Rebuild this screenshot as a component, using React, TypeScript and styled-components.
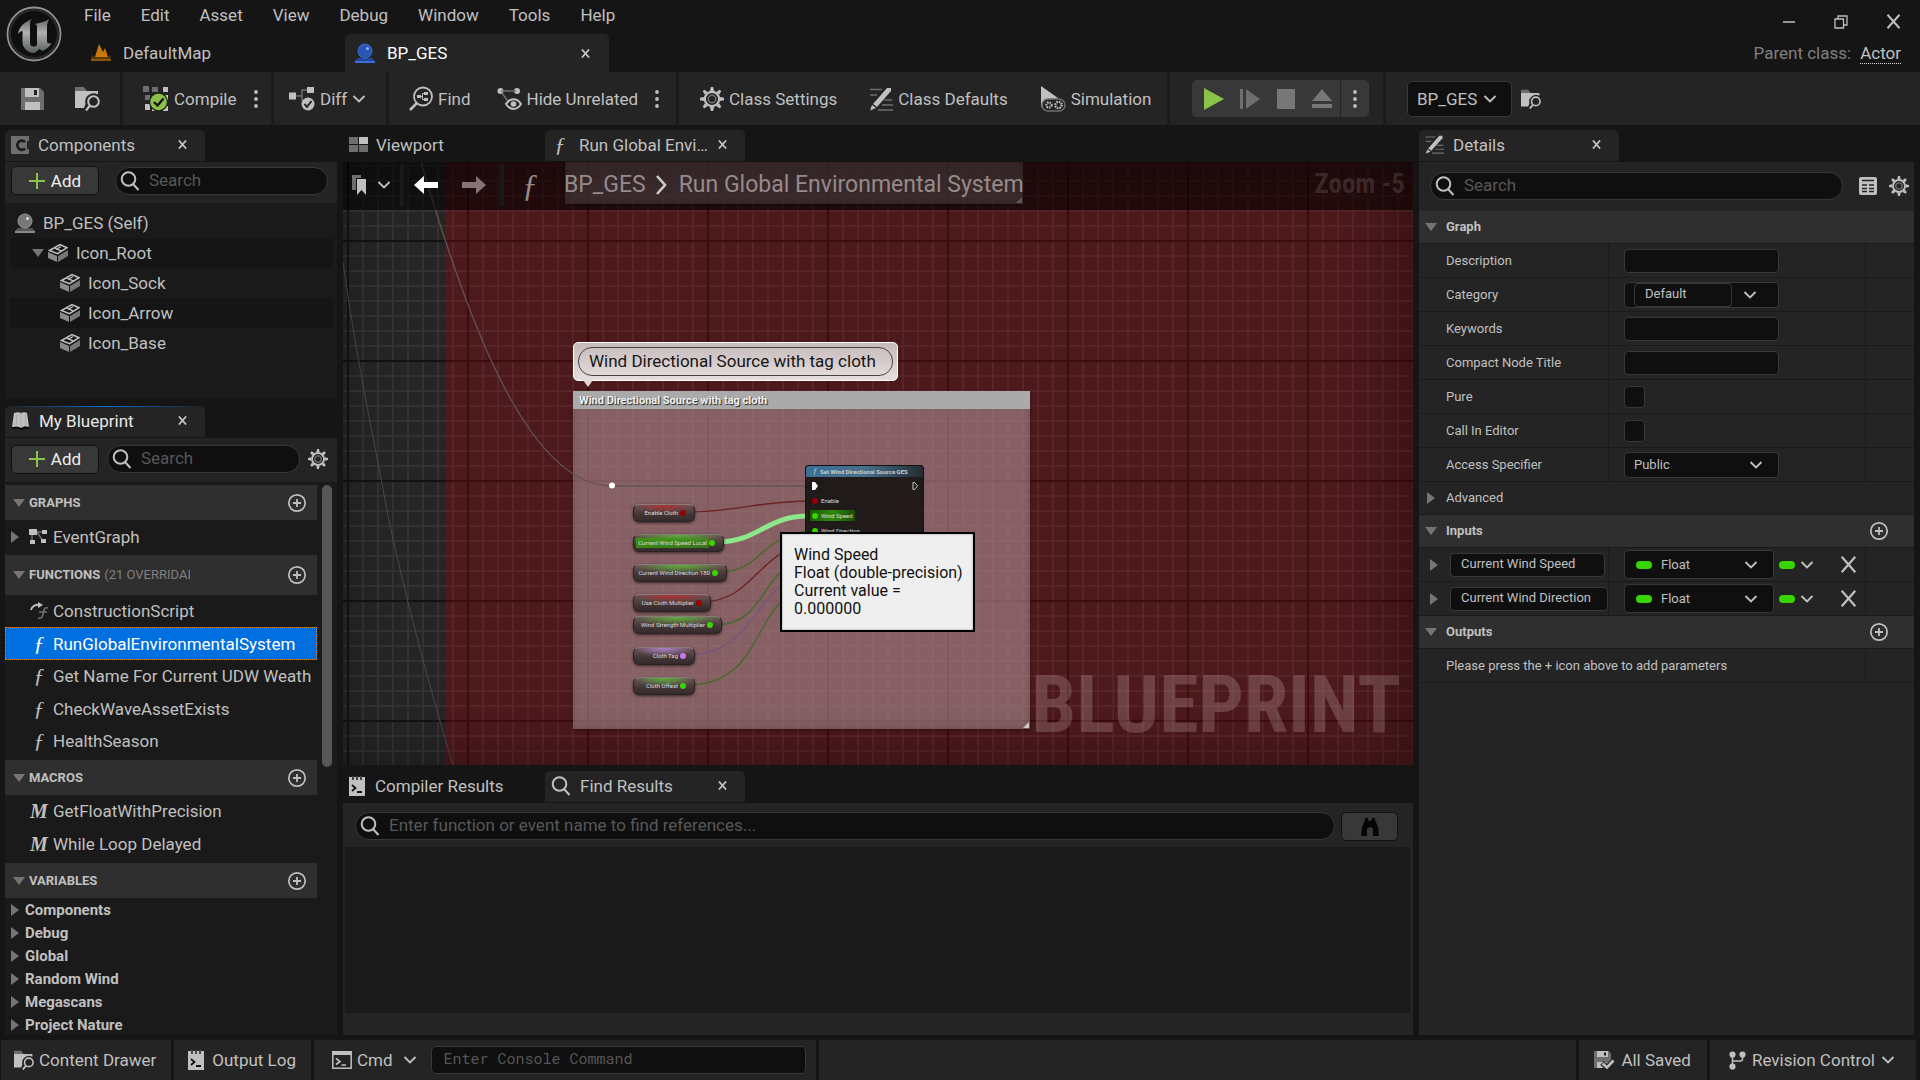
import React from 'react';
import styled, { createGlobalStyle, css } from 'styled-components';

const c = {
  back: '#151515', panel: '#242424', recess: '#1a1a1a', header: '#2f2f2f', input: '#0f0f0f',
  line: '#1a1a1a', border: '#383838', text: '#c0c0c0', dim: '#808080', faint: '#575757',
  green: '#8bc24a', pin: '#38d500', blue: '#0070e0',
};

const GlobalStyle = createGlobalStyle`
  *, *::before, *::after { box-sizing: border-box; }
  html, body { margin: 0; background: ${c.back}; }
  body, button, input, select {
    font-family: Roboto, "Liberation Sans", sans-serif; font-size: 17px; line-height: 20px; color: ${c.text};
  }
  button { border: 0; padding: 0; background: none; cursor: pointer; }
  svg { display: block; flex: none; }
  ul { margin: 0; padding: 0; list-style: none; }
`;

/* ---------- icons ---------- */
type IconProps = { size?: number; w?: number; h?: number; children?: React.ReactNode };
const Svg = ({ size = 24, w, h, children }: IconProps) => (
  <svg width={w ?? size} height={h ?? size} viewBox={`0 0 ${w ?? size} ${h ?? size}`} fill="none" aria-hidden="true">{children}</svg>
);
const L = c.text;
const D = '#6e6e6e';

const Chevron = () => <Svg w={14} h={10}><path d="M1.500 2L7 7.500 12.500 2" stroke={L} strokeWidth="1.900" /></Svg>;
const Cross = ({ size = 9 }: { size?: number }) => (
  <svg width={size} height={size} viewBox="0 0 10 10" aria-hidden="true"><path d="M1 .5l8 9M9 .5L1 9.500" stroke={L} strokeWidth={size > 10 ? 1.3 : 2} /></svg>
);
const Dots = () => <Svg w={6} h={20}><circle cx="3" cy="3" r="1.900" fill={L} /><circle cx="3" cy="10" r="1.900" fill={L} /><circle cx="3" cy="17" r="1.900" fill={L} /></Svg>;
const TriDown = () => <Svg w={12} h={8}><path d="M0 0h12L6 8z" fill="#757575" /></Svg>;
const TriRight = () => <Svg w={8} h={12}><path d="M0 0l8 6-8 6z" fill="#757575" /></Svg>;
const Magnifier = () => <Svg size={20}><circle cx="8.500" cy="8" r="6.800" stroke={L} strokeWidth="2" /><path d="M13 13l5.500 6" stroke={L} strokeWidth="2" /></Svg>;
const Plus = () => <Svg size={16}><path d="M8 0v16M0 8h16" stroke={c.green} strokeWidth="2" /></Svg>;
const PlusCircle = () => <Svg size={20}><circle cx="10" cy="10" r="8.200" stroke={L} strokeWidth="1.700" /><path d="M10 6v8M6 10h8" stroke={L} strokeWidth="1.800" /></Svg>;
const Save = () => <Svg w={23} h={24}><path d="M0 1h19l4 4v18H0z" fill={D} /><path d="M4 1h14v9H4zM4 15h15v8H4z" fill={L} /><path d="M13 3h3v5h-3z" fill="#222" /></Svg>;
const SaveCheck = () => <Svg w={21} h={20}><path d="M0 1h15l2 3v14H0z" fill={D} /><path d="M3 1h11v6H3zM3 12h9v6H3z" fill={L} /><path d="M10 2.500h2v3h-2z" fill="#222" /><path d="M8 13l5 5 7-8" stroke="#242424" strokeWidth="5" /><path d="M8.500 13.500l4.500 4 6.500-7" stroke={L} strokeWidth="2.600" /></Svg>;
const FolderSearch = ({ small }: { small?: boolean }) => (
  <svg width={small ? 20 : 25} height={small ? 20 : 25} viewBox="0 0 25 25" fill="none" aria-hidden="true">
    <path d="M0 1h9l3 4H0z" fill={D} /><path d="M0 5h23v3.500a8.500 8.500 0 0 0-12.500 9.500L9 22H0z" fill={L} />
    <circle cx="18.500" cy="15.500" r="5.300" stroke={L} strokeWidth="2" /><path d="M15 19.500L11 24.500" stroke={L} strokeWidth="2.200" />
  </svg>
);
const Compile = () => (
  <Svg w={26} h={26}>
    <path d="M0 0h6v6H0zM9 1h6v5H9zM2 9h5v5H2z" fill={D} /><path d="M20 1h5v5h-5zM10 9h5v5h-5zM19 9h6v5h-6zM2 18h5v6H2zM20 20h5v5h-5zM9 20h5v5H9z" fill={L} />
    <circle cx="15.500" cy="16" r="9.500" fill="#1d2414" /><circle cx="15.500" cy="16" r="8.300" fill={c.green} /><path d="M11 16l3.500 3.500 6-7" stroke="#111" strokeWidth="2.400" />
  </Svg>
);
const Diff = () => (
  <Svg w={26} h={26}>
    <path d="M7 10h6M13 10V4h5M13 10v5" stroke={D} strokeWidth="1.500" /><path d="M0 6.500h7v7H0zM18 1h7v6h-7z" fill={L} />
    <circle cx="19" cy="18" r="6.500" fill={L} /><path d="M15.500 18l2.500 3 4.500-6" stroke="#242424" strokeWidth="2" />
  </Svg>
);
const FindGraph = () => (
  <Svg w={24} h={25}>
    <circle cx="14" cy="10.500" r="9" stroke={L} strokeWidth="1.800" /><path d="M8 17l-7 7" stroke={L} strokeWidth="2.600" />
    <path d="M8 9h4v3H8zM15 6h4v3h-4zM15 12h4v3h-4z" fill={L} /><path d="M12 10.500h2M15 7.500h-1.500v6H15" stroke={L} />
  </Svg>
);
const HideUnrelated = () => (
  <Svg w={25} h={24}>
    <circle cx="3.500" cy="4" r="3" fill={L} /><circle cx="20" cy="4" r="3" fill={L} /><path d="M4 4h15M5 6l5 7" stroke={D} strokeWidth="1.500" />
    <path d="M9 17c4-6.500 11-6.500 15 0-4 6.500-11 6.500-15 0z" stroke={L} strokeWidth="2" /><circle cx="16.500" cy="17" r="2.800" fill={L} />
  </Svg>
);
const Gear = ({ size = 24 }: { size?: number }) => (
  <svg width={size} height={size} viewBox="-12 -12 24 24" fill="none" aria-hidden="true">
    {[0, 45, 90, 135, 180, 225, 270, 315].map(a => <path key={a} transform={`rotate(${a})`} d="M-2 -8l.8-4h2.400L2 -8z" fill={L} />)}
    <circle r="7.200" stroke={L} strokeWidth="2.200" /><circle r="3.800" stroke={D} strokeWidth="1.600" />
  </svg>
);
const PencilLines = ({ size = 24 }: { size?: number }) => (
  <svg width={size} height={size} viewBox="0 0 24 24" fill="none" aria-hidden="true">
    <path d="M1 2.500h12M1 8h7M15 13h8M13 18h11M9 23h15" stroke={D} strokeWidth="1.500" />
    <path d="M18 1h4v3L8 20l-4-3z" fill={L} /><path d="M3 18l4 3-6 2.500z" fill={L} />
  </svg>
);
const Simulation = () => (
  <Svg w={26} h={26}>
    <path d="M1 0l17 12L1 21z" fill={L} /><rect x="2" y="13" width="23" height="12" rx="6" fill="#242424" stroke={D} strokeWidth="1.500" />
    <circle cx="9" cy="19" r="2.600" stroke={L} strokeWidth="2.200" strokeDasharray="1.500 1" /><circle cx="18.500" cy="19" r="3.200" stroke={L} strokeWidth="2.200" strokeDasharray="1.500 1" />
  </Svg>
);
const Orb = ({ blue }: { blue?: boolean }) => (
  <Svg size={20}>
    <path d="M3 15h14l3 3H0z" fill={blue ? '#24479a' : '#555'} /><path d="M0 18h20v2H0z" fill={blue ? '#3a6fdd' : '#8a8a8a'} />
    <circle cx="10" cy="8" r="7" fill={blue ? '#2c56b4' : '#777'} stroke={blue ? '#3a6fdd' : '#999'} /><circle cx="12.500" cy="5.500" r="1.500" fill={blue ? '#8fb4ff' : '#ddd'} />
  </Svg>
);
const MapIcon = () => <Svg size={20}><path d="M4 14L8 1l4 8 2-4 3 9z" fill="#c97a08" /><path d="M1 12l-1 5h20l-1-5-2 2H3z" fill="#5b3a0b" /><path d="M0 16h20v2H0z" fill="#8a560c" /></Svg>;
const ComponentsIcon = () => <Svg w={18} h={18}><path d="M0 0h18v5h-2v8h2v5H0z" fill={D} /><path d="M14 6a4.500 4.500 0 1 0 0 6.500" stroke="#1c1c1c" strokeWidth="2.800" /></Svg>;
const ViewportIcon = () => <Svg w={19} h={15}><path d="M0 0h9v7H0z M0 8h9v7H0z M10 8h9v7h-9z" fill={D} /><path d="M10 0h9v7h-9z" fill={L} /></Svg>;
const BookIcon = () => <Svg w={20} h={18}><path d="M3 1c3-1 5-1 7 0 2-1 4-1 6 0l2 14c-3-1-5-1-8 1-3-2-6-1-9-1z" fill={L} /><path d="M10 1v14M6 2L5 14M14 2l1 12" stroke="#aaa" /><path d="M1 16c4-1 7 0 9 1 3-1 6-2 8-1" stroke="#050505" strokeWidth="1.500" /></Svg>;
const Cube = () => (
  <Svg w={20} h={20}>
    <path d="M0 9l9 4v6l-9-4z" fill="#8a8a8a" /><path d="M10 13l10-6v6l-10 6z" fill="#777" />
    <path d="M1.500 7.500L12 1.500l7 3.200-9.500 6z" stroke={L} strokeWidth="1.500" /><path d="M6.500 4.800l7.500 3.500M8 6.500l5-3" stroke={L} strokeWidth="1.300" />
  </Svg>
);
const EventGraphIcon = () => <Svg w={19} h={17}><path d="M8 4h6M8 4l6 9M3 6v8" stroke={D} strokeWidth="1.500" /><path d="M0 1h8v6H0zM13 2h5v4h-5zM1 12h5v4H1zM12 11h5v4h-5z" fill={L} /></Svg>;
const ConstructionIcon = () => <Svg w={18} h={18}><path d="M1 8c1-4 5-6 9-5" stroke={L} strokeWidth="1.800" /><path d="M8 0l5 3-5 3z" fill={L} /><path d="M18 6c-3-1-4 1-4.500 4-1 5-1.500 7-5.500 6M9 10h8" stroke={D} strokeWidth="1.600" /></Svg>;
const LogIcon = () => <Svg w={16} h={20}><path d="M0 1h3v3h2V1h2v3h2V1h2v3h2V1h3v19H0z" fill={L} /><path d="M4 0v4M8 0v4M12 0v4" stroke={D} /><path d="M3 9l3.500 3L3 15M8 16h5" stroke="#111" strokeWidth="1.800" /></Svg>;
const CmdIcon = () => <Svg w={20} h={18}><rect x=".8" y=".8" width="18.400" height="16.400" stroke={L} strokeWidth="1.500" /><path d="M0 0h20v4H0z" fill={L} /><path d="M4 7.500l4 3-4 3M9.500 14H14" stroke={L} strokeWidth="1.600" /></Svg>;
const Branch = () => <Svg w={17} h={19}><path d="M3.500 3v13M13.500 3v5q0 2-2 2H4" stroke={L} strokeWidth="1.500" /><circle cx="3.500" cy="3.500" r="3.100" fill={L} /><circle cx="13.500" cy="3.500" r="3.100" fill={L} /><circle cx="3.500" cy="15.500" r="3.100" fill={L} /></Svg>;
const TableIcon = () => <Svg w={18} h={18}><rect width="18" height="18" rx="2" fill={L} /><path d="M3 3.500h12M3 8h5M10 8h5M3 11.500h5M10 11.500h5M3 14.500h5M10 14.500h5" stroke="#242424" strokeWidth="1.700" /></Svg>;
const Bookmark = () => <Svg w={16} h={20}><path d="M0 0h9v3H4v12H0z" fill={D} /><path d="M5 4h9v16l-4.500-5L5 20z" fill={L} /></Svg>;
const Binoculars = () => <Svg w={18} h={18}><path d="M4 0h3v2h1v8H6v8H0l1-9 3-7zM14 0h-3v2h-1v8h2v8h6l-1-9-3-7z" fill="#050505" /><path d="M8 3h2v6H8z" fill="#050505" /></Svg>;
const ArrowLeft = () => <Svg w={24} h={20}><path d="M0 10L10 1v6h14v6H10v6z" fill="#fff" /></Svg>;
const ArrowRight = () => <Svg w={24} h={20}><path d="M24 10L14 1v6H0v6h14v6z" fill="#857476" /></Svg>;
const Logo = () => (
  <Svg size={56}>
    <defs><linearGradient id="metal" x1="0" y1="0" x2="0" y2="1"><stop offset="0" stopColor="#666" /><stop offset=".4" stopColor="#b0b0b0" /><stop offset="1" stopColor="#56605f" /></linearGradient></defs>
    <circle cx="28" cy="28" r="26.500" fill="#0f0f0f" stroke="#8f9494" strokeWidth="1.800" /><circle cx="28" cy="28" r="24" stroke="#2b2b2b" strokeWidth="2" />
    <path d="M12 28c1-7 6-12 14-15-2 2-2 3-2 5v18c0 3 1 4.500 3.500 4.500S31 40 31 38V21c0-2-1-3-2.500-3 5-1 10-2 15-5-2 3-2.500 5-2.500 7v15c0 2 1 3 4.500 2-2 4-5 6-9 8l-3-2-5 4c-7 0-12-5-12-11V26c0-2-2-1-4.500 2z" fill="url(#metal)" />
  </Svg>
);

const Glyph = styled.i<{ $size?: number; $bold?: boolean; $w?: number }>`
  font: italic ${p => (p.$bold ? 700 : 400)} ${p => p.$size ?? 22}px/20px "Liberation Serif", serif;
  width: ${p => p.$w ?? 18}px; text-align: center; flex: none;
`;

/* ---------- frame ---------- */
const Shell = styled.div`display: flex; flex-direction: column; height: 100vh; overflow: hidden; background: ${c.back}; white-space: nowrap;`;
const TitleBar = styled.header`display: flex; height: 72px; flex: none;`;
const LogoBox = styled.div`padding: 6px 0 0 6px; width: 81px;`;
const TitleMid = styled.div`flex: 1; display: flex; flex-direction: column; justify-content: space-between;`;
const MenuBar = styled.nav`display: flex; gap: 30px; padding: 5px 0 0 3px;`;
const DocTabs = styled.div`display: flex; height: 38px;`;
const DocTab = styled.div<{ $on?: boolean }>`
  display: flex; align-items: center; gap: 12px; width: 264px; padding: 0 19px 0 10px;
  border-radius: 5px 5px 0 0; background: ${p => (p.$on ? c.panel : 'transparent')}; color: ${p => (p.$on ? '#fff' : c.text)};
  & > span { flex: 1; }
`;
const TitleRight = styled.div`display: flex; flex-direction: column; align-items: flex-end; padding: 14px 19px 0 0; gap: 14px;`;
const WindowButtons = styled.div`display: flex; gap: 36px; align-items: center; height: 15px; button { width: 16px; display: grid; place-items: center; }`;
const Parent = styled.div`color: ${c.dim}; display: flex; gap: 9px; a { color: ${c.text}; text-decoration: none; border-bottom: 1px dotted #ddd; }`;

const Toolbar = styled.div`display: flex; height: 53px; flex: none; background: ${c.panel}; margin-bottom: 5px;`;
const ToolGroup = styled.div<{ $w?: number; $gap?: number; $pad?: number }>`
  display: flex; align-items: center; gap: ${p => p.$gap ?? 20}px; padding-left: ${p => p.$pad ?? 21}px;
  ${p => p.$w && css`width: ${p.$w}px;`} border-right: 3px solid ${c.line};
  &:last-child { border-right: 0; }
`;
const ToolButton = styled.button`display: flex; align-items: center; gap: 5px;`;
const Split = styled.div`display: flex; align-items: center; gap: 16px;`;
const PlayGroup = styled.div`
  display: flex; align-items: center; height: 37px; padding-left: 4px; background: #383838; border-radius: 5px;
  button { width: 36px; height: 37px; display: grid; place-items: center; }
  button:last-child { width: 29px; border-left: 1px solid ${c.panel}; }
`;
const TargetSelect = styled.button`
  display: flex; align-items: center; justify-content: space-between; width: 105px; height: 36px; padding: 0 14px 0 9px;
  background: ${c.input}; border: 1px solid ${c.border}; border-radius: 5px;
`;

const Main = styled.main`flex: 1; min-height: 0; display: grid; grid-template-columns: 332px minmax(0, 1fr) 495px; column-gap: 6px; padding: 0 6px 5px 5px;`;
const Column = styled.section`display: flex; flex-direction: column; min-height: 0; min-width: 0;`;
const TabStrip = styled.div<{ $top?: number }>`display: flex; height: 32px; flex: none; margin-top: ${p => p.$top ?? 0}px;`;
const PanelTab = styled.div<{ $on?: boolean; $focus?: boolean; $gap?: number }>`
  position: relative; display: flex; align-items: center; gap: ${p => p.$gap ?? 9}px; width: ${p => (p.$on ? 200 : 202)}px; height: 31px; padding: 0 18px 2px 6px;
  background: ${p => (p.$on ? c.panel : 'transparent')}; border-radius: 5px 5px 0 0; color: ${p => (p.$focus ? '#e8e8e8' : c.text)};
  & > span { flex: 1; overflow: hidden; }
  ${p => p.$focus && css`&::before { content: ''; position: absolute; inset: 0 4px auto 4px; height: 1px; background: linear-gradient(90deg, transparent, ${c.blue}, transparent); }`}
`;
const PanelBar = styled.div<{ $h: number; $gap: number; $pb: number }>`
  display: flex; align-items: center; gap: ${p => p.$gap}px; height: ${p => p.$h}px; flex: none; padding: 0 9px ${p => p.$pb}px 6px; background: ${c.panel};
`;
const AddButton = styled.button`
  display: flex; align-items: center; justify-content: center; gap: 6px; width: 88px; height: 29px; flex: none;
  background: #383838; border: 1px solid #111; border-radius: 5px; color: #f0f0f0;
`;
const SearchBox = styled.label`
  display: flex; align-items: center; gap: 9px; flex: 1; min-width: 0; height: 28px; padding: 0 4px;
  background: ${c.input}; border: 1px solid ${c.border}; border-radius: 14px;
  input { flex: 1; min-width: 0; border: 0; outline: 0; padding: 0 0 2px; background: none; }
  input::placeholder { color: ${c.faint}; opacity: 1; }
`;

/* ---------- left column ---------- */
const Tree = styled.ul`height: 196px; padding: 5px 4px 0 5px; background: ${c.recess}; margin-bottom: 7px;`;
const TreeRow = styled.li<{ $pad: number; $dark?: boolean }>`
  display: flex; align-items: center; height: 30px; padding-left: ${p => p.$pad}px; background: ${p => (p.$dark ? c.back : 'transparent')};
  & > span { padding-left: 8px; }
`;
const Disclosure = styled.button`width: 16px;`;
const BlueprintBody = styled.div`flex: 1; min-height: 0; display: flex; gap: 5px; padding: 3px 5px 0 0; background: ${c.recess}; overflow: hidden;`;
const BlueprintList = styled.div`flex: 1; min-width: 0; overflow: hidden;`;
const ScrollThumb = styled.div`width: 10px; height: 282px; border-radius: 5px; background: #575757;`;
const Section = styled.div<{ $h?: number }>`
  display: flex; align-items: center; gap: 4px; height: ${p => p.$h ?? 35}px; padding: 0 10px 0 8px; background: ${c.header};
  font-size: 13px; font-weight: 700;
  span { font-weight: 400; color: ${c.dim}; width: 86px; overflow: hidden; }
  button { margin-left: auto; }
`;
const Items = styled.ul`padding-bottom: 3px;`;
const Item = styled.li<{ $on?: boolean }>`
  display: flex; align-items: center; gap: 5px; height: 33px; padding: 0 4px 0 25px; overflow: hidden;
  &:nth-child(odd) { height: 32px; }
  ${p => p.$on && css`background: ${c.blue}; outline: 1px dotted #e08a20; outline-offset: -1px; color: #fff;`}
  & > span { overflow: hidden; }
`;
const GraphItem = styled.li`display: flex; align-items: center; height: 35px; padding: 0 0 2px 6px; gap: 5px; & > svg:first-child { margin-right: 5px; }`;
const Category = styled.li`display: flex; align-items: center; gap: 6px; height: 23px; padding-left: 6px; font-size: 15px; font-weight: 700;`;

/* ---------- graph ---------- */
const grid = (minor: string, major: string, x: number, y: number) => css`
  background-image:
    linear-gradient(90deg, ${major} 2px, transparent 2px), linear-gradient(${major} 2px, transparent 2px),
    linear-gradient(90deg, ${minor} 2px, transparent 2px), linear-gradient(${minor} 2px, transparent 2px);
  background-size: 120px 120px, 120px 120px, 15px 15px, 15px 15px;
  background-position: ${x}px ${y}px;
`;
const Graph = styled.div`position: relative; flex: 1; min-height: 0; overflow: hidden; background-color: #252525; ${grid('#323232', '#131313', 4, 78)}`;
const RedZone = styled.div`position: absolute; inset: 0 0 0 102px; background-color: #4c191d; ${grid('#572427', '#3d0c0f', 22, 78)}`;
const Comment = styled.div<{ $x: number; $y: number; $w: number; $h: number }>`
  position: absolute; left: ${p => p.$x}px; top: ${p => p.$y}px; width: ${p => p.$w}px; height: ${p => p.$h}px;
  background: rgba(173, 143, 148, .6); box-shadow: 0 1px 3px rgba(0,0,0,.4), inset 0 0 6px rgba(90,60,65,.5);
  &::after { content: ''; position: absolute; right: 1px; bottom: 1px; border: 3px solid transparent; border-right-color: #d8cccc; border-bottom-color: #d8cccc; }
`;
const CommentTitle = styled.div`height: 18px; padding-left: 6px; background: #aaa; color: #f0f0f0; font-size: 11px; line-height: 20px; font-weight: 700; text-shadow: 1px 1px 1px #222;`;
const Vignette = styled.div`position: absolute; inset: 0; box-shadow: inset -10px 0 60px rgba(0,0,0,.35); pointer-events: none;`;
const Wires = styled.svg`position: absolute; left: 0; top: 0;`;
const Bubble = styled.div`
  position: absolute; left: 230px; top: 180px; padding: 4px; border: 1px solid #fff; border-radius: 5px; background: linear-gradient(#c6babb, #e6dede);
  &::after { content: ''; position: absolute; left: 9px; top: 100%; border: 5px solid transparent; border-top: 7px solid #e0d5d6; border-bottom: 0; }
`;
const BubbleText = styled.div`height: 29px; padding: 0 16px 0 10px; border: 1px solid #444; border-radius: 14px; line-height: 26px; color: #161616; font-size: 17px;`;
const VarNode = styled.div<{ $y: number; $w: number; $tint: string }>`
  position: absolute; left: 290px; top: ${p => p.$y}px; width: ${p => p.$w}px; height: 18px; border-radius: 6px; border: 1px solid #2a2222; border-top-color: #8a7b7d;
  background: radial-gradient(ellipse 50% 55% at 50% 0, ${p => p.$tint}, transparent), linear-gradient(#6b5557, #443638 60%, #352a2b);
  box-shadow: 0 1px 3px rgba(0,0,0,.6); display: flex; align-items: center; justify-content: flex-end; gap: 2px; padding-right: 8px;
  color: #ddd; font-size: 6px; line-height: 8px;
`;
const Pin = styled.b<{ $c: string }>`width: 6px; height: 6px; border-radius: 3px; background: ${p => p.$c}; flex: none;`;
const Hot = styled.span`background: linear-gradient(90deg, rgba(56,160,10,.8), rgba(56,160,10,.6)); padding: 1px 2px; margin-right: -2px;`;
const FnNode = styled.div`position: absolute; left: 462px; top: 303px; width: 119px; height: 150px; border-radius: 3px; border: 1px solid #111; background: rgba(24,22,20,.92); font-size: 6px; line-height: 8px; color: #ddd;`;
const FnTitle = styled.div`height: 11px; display: flex; align-items: center; gap: 2px; padding-left: 6px; font-weight: 700; color: #ccc; background: linear-gradient(90deg, #3c6f96, #46708c 50%, #232b31); border-radius: 3px 3px 0 0;`;
const FnRow = styled.div<{ $hot?: boolean }>`
  display: flex; align-items: center; gap: 3px; height: 11px; margin: 0 68px 4px 4px; padding-left: 2px;
  ${p => p.$hot && css`background: linear-gradient(90deg, #1b5a05, #2f8a0c, #1b4a08);`}
`;
const Tooltip = styled.div`
  position: absolute; left: 437px; top: 370px; width: 195px; height: 100px; padding: 12px; border: 2px solid #000; background: #efefef; box-shadow: inset 0 0 2px #888;
  color: #111; font-size: 16px; line-height: 18px;
`;
const mark = css`position: absolute; font-family: "Roboto Condensed", "Liberation Sans Narrow", Roboto, sans-serif; font-weight: 700; line-height: 1;`;
const Watermark = styled.div`${mark} right: 12px; bottom: 20px; font-size: 80px; color: rgba(190, 160, 160, .3);`;
const ZoomLabel = styled.div`${mark} right: 8px; top: 9px; font-size: 27px; color: rgba(190, 160, 160, .2);`;
const CrumbBar = styled.div`
  position: absolute; inset: 0 0 auto 0; height: 48px; display: flex; align-items: center; padding: 0 0 2px 9px; background: rgba(0,0,0,.55);
  color: #958b8c; font-size: 23px; line-height: 28px;
`;
const Bar = styled.div<{ $ml: number }>`width: 4px; height: 42px; background: #1a1a1a; margin-left: ${p => p.$ml}px;`;
const CrumbIcon = styled.button<{ $ml?: number }>`margin-left: ${p => p.$ml ?? 0}px; display: flex; align-items: center; gap: 9px;`;
const CrumbText = styled.span<{ $ml: number }>`margin-left: ${p => p.$ml}px;`;

/* ---------- bottom panel ---------- */
const Results = styled.div`height: 232px; flex: none; background: ${c.panel}; padding: 0 3px 22px 2px; display: flex; flex-direction: column;`;
const ResultsBar = styled.div`display: flex; gap: 6px; height: 44px; padding: 9px 12px 0 10px;`;
const ResultsList = styled.div`flex: 1; background: ${c.recess};`;
const FindButton = styled.button`width: 57px; height: 29px; display: grid; place-items: center; background: #383838; border: 1px solid #111; border-radius: 5px;`;

/* ---------- details ---------- */
const Details = styled.div`flex: 1; background: ${c.panel}; font-size: 13px; line-height: 16px;`;
const DetailsBar = styled.div`display: flex; align-items: center; gap: 12px; height: 49px; padding: 0 5px 2px 11px; label { margin-right: 4px; }`;
const DetailsHead = styled.div`
  display: flex; align-items: center; gap: 9px; height: 33px; padding: 0 25px 0 6px; background: ${c.header}; border-bottom: 1px solid ${c.line};
  font-weight: 700; button { margin-left: auto; }
`;
const Prop = styled.div`display: grid; grid-template-columns: 189px 1fr 49px; height: 34px; border-bottom: 1px solid ${c.line}; & > * + * { border-left: 1px solid ${c.line}; }`;
const Name = styled.label<{ $tight?: boolean }>`display: flex; align-items: center; gap: ${p => (p.$tight ? 12 : 9)}px; padding-left: ${p => (p.$tight ? 11 : 27)}px;`;
const Value = styled.div`display: flex; align-items: center; padding-left: 15px;`;
const Message = styled.p`margin: 0; grid-column: 1 / 3; align-self: center; padding-left: 27px;`;
const field = css`background: ${c.input}; border: 1px solid ${c.border}; border-radius: 4px; font-size: 13px; line-height: 16px; outline: 0;`;
const TextField = styled.input<{ $w?: number }>`${field} width: ${p => p.$w ?? 155}px; height: 24px; padding: 0 10px 3px;`;
const Check = styled.input`appearance: none; margin: 0; width: 21px; height: 22px; ${field}`;
const Combo = styled.div<{ $w?: number; $h?: number; $inset?: boolean }>`
  ${field} display: flex; align-items: center; width: ${p => p.$w ?? 155}px; height: ${p => p.$h ?? 26}px; padding: 0 15px 0 ${p => (p.$inset ? 9 : 0)}px;
  gap: ${p => (p.$inset ? 11 : 0)}px;
  select { appearance: none; flex: 1; align-self: stretch; border: 0; outline: 0; background: none; padding: 0 0 0 9px; font-size: 13px; line-height: 16px; }
`;
const Pill = styled.i<{ $ml?: number }>`width: 16px; height: 8px; border-radius: 4px; background: ${c.pin}; margin-left: ${p => p.$ml ?? 0}px;`;
const MiniButton = styled.button<{ $ml: number }>`display: flex; align-items: center; gap: 5px; margin-left: ${p => p.$ml}px;`;
const Advanced = styled.div`display: flex; align-items: center; gap: 11px; height: 33px; padding-left: 8px; border-bottom: 1px solid ${c.line};`;

/* ---------- status bar ---------- */
const Status = styled.footer`display: flex; gap: 3px; height: 40px; flex: none; padding: 0 4px 0 1px;`;
const Seg = styled.div<{ $pl?: number; $pr?: number; $gap?: number; $grow?: boolean }>`
  display: flex; align-items: center; background: ${c.panel}; padding: 0 ${p => p.$pr ?? 15}px 0 ${p => p.$pl ?? 13}px; ${p => p.$grow && 'flex: 1;'}
  button { display: flex; align-items: center; gap: ${p => p.$gap ?? 6}px; }
`;
const CmdLabel = styled.span`padding-right: 5px;`;
const Console = styled.input`
  width: 375px; height: 28px; margin-left: 14px; padding: 0 12px 5px; background: ${c.input}; border: 1px solid ${c.border}; border-radius: 5px; outline: 0;
  font: 15px/18px "Roboto Mono", "DejaVu Sans Mono", monospace; &::placeholder { color: ${c.faint}; opacity: 1; }
`;

const menu = ['File', 'Edit', 'Asset', 'View', 'Debug', 'Window', 'Tools', 'Help'];
const functions = ['RunGlobalEnvironmentalSystem', 'Get Name For Current UDW Weath', 'CheckWaveAssetExists', 'HealthSeason'];
const categories = ['Components', 'Debug', 'Global', 'Random Wind', 'Megascans', 'Project Nature'];
const red = '#960000', green = c.pin, violet = '#c678f0';
const nodes = [
  { t: 'Enable Cloth', y: 342, w: 62, c: red },
  { t: 'Current Wind Speed Local', y: 372, w: 91, c: green, hot: true },
  { t: 'Current Wind Direction 180', y: 402, w: 94, c: green },
  { t: 'Use Cloth Multiplier', y: 432, w: 78, c: red },
  { t: 'Wind Strength Multiplier', y: 454, w: 89, c: green },
  { t: 'Cloth Tag', y: 485, w: 62, c: violet },
  { t: 'Cloth Offest', y: 515, w: 62, c: green },
];
const tints: Record<string, string> = { [red]: 'rgba(190,40,40,.8)', [green]: 'rgba(90,200,50,.8)', [violet]: 'rgba(190,140,230,.8)' };

const PropRow = ({ id, label, children }: { id: string; label: string; children: React.ReactNode }) => (
  <Prop><Name htmlFor={id}>{label}</Name><Value>{children}</Value><div /></Prop>
);
const InputRow = ({ name, wide }: { name: string; wide?: boolean }) => (
  <Prop>
    <Name as="div" $tight><TriRight /><TextField $w={wide ? 158 : 155} defaultValue={name} aria-label="Parameter name" /></Name>
    <Value>
      <Combo $w={150} $h={29}><Pill $ml={11} /><select aria-label={`${name} type`}><option>Float</option></select><Chevron /></Combo>
      <MiniButton $ml={5} aria-label="Container type"><Pill /><Chevron /></MiniButton>
      <MiniButton $ml={26} aria-label="Remove parameter"><Cross size={17} /></MiniButton>
    </Value>
    <div />
  </Prop>
);

export default function App() {
  return (
    <Shell>
      <GlobalStyle />
      <TitleBar>
        <LogoBox><Logo /></LogoBox>
        <TitleMid>
          <MenuBar>{menu.map(m => <button key={m}>{m}</button>)}</MenuBar>
          <DocTabs>
            <DocTab><MapIcon /><span>DefaultMap</span></DocTab>
            <DocTab $on><Orb blue /><span>BP_GES</span><button aria-label="Close BP_GES"><Cross /></button></DocTab>
          </DocTabs>
        </TitleMid>
        <TitleRight>
          <WindowButtons>
            <button aria-label="Minimize"><Svg w={12} h={2}><path d="M0 1h12" stroke={L} strokeWidth="1.500" /></Svg></button>
            <button aria-label="Restore"><Svg size={14}><path d="M1 4h8.500v9H1zM4 4V1h9v9H9.500" stroke={L} strokeWidth="1.300" /></Svg></button>
            <button aria-label="Close"><Cross size={15} /></button>
          </WindowButtons>
          <Parent>Parent class: <a href="#actor">Actor</a></Parent>
        </TitleRight>
      </TitleBar>

      <Toolbar>
        <ToolGroup $w={123} $gap={31}><button aria-label="Save"><Save /></button><button aria-label="Browse"><FolderSearch /></button></ToolGroup>
        <ToolGroup $w={151} $pad={20}><Split><ToolButton><Compile />Compile</ToolButton><button aria-label="Compile options"><Dots /></button></Split></ToolGroup>
        <ToolGroup $w={115} $pad={15}><ToolButton><Diff />Diff<Chevron /></ToolButton></ToolGroup>
        <ToolGroup $w={290} $gap={26} $pad={20}><ToolButton><FindGraph />Find</ToolButton><Split><ToolButton><HideUnrelated />Hide Unrelated</ToolButton><button aria-label="Hide options"><Dots /></button></Split></ToolGroup>
        <ToolGroup $w={491} $gap={32}>
          <ToolButton><Gear />Class Settings</ToolButton><ToolButton><PencilLines />Class Defaults</ToolButton><ToolButton><Simulation />Simulation</ToolButton>
        </ToolGroup>
        <ToolGroup $w={216} $pad={22}>
          <PlayGroup>
            <button aria-label="Play"><Svg w={20} h={22}><path d="M0 0l20 11L0 22z" fill={c.green} /></Svg></button>
            <button aria-label="Step"><Svg w={20} h={20}><path d="M0 0h3v20H0zM6 0l14 10L6 20z" fill={D} /></Svg></button>
            <button aria-label="Stop"><Svg w={18} h={20}><path d="M0 0h18v20H0z" fill="#777" /></Svg></button>
            <button aria-label="Eject"><Svg w={20} h={20}><path d="M10 0l10 12H0zM0 15h20v4H0z" fill="#777" /></Svg></button>
            <button aria-label="Play options"><Dots /></button>
          </PlayGroup>
        </ToolGroup>
        <ToolGroup $gap={9}><TargetSelect>BP_GES<Chevron /></TargetSelect><button aria-label="Browse to target"><FolderSearch small /></button></ToolGroup>
      </Toolbar>

      <Main>
        <Column>
          <TabStrip><PanelTab $on><ComponentsIcon /><span>Components</span><button aria-label="Close Components"><Cross /></button></PanelTab></TabStrip>
          <PanelBar $h={41} $gap={16} $pb={4}><AddButton><Plus />Add</AddButton><SearchBox><Magnifier /><input placeholder="Search" aria-label="Search components" /></SearchBox></PanelBar>
          <Tree>
            <TreeRow $pad={5}><Orb /><span>BP_GES (Self)</span></TreeRow>
            <TreeRow $pad={22} $dark><Disclosure aria-label="Collapse Icon_Root"><TriDown /></Disclosure><Cube /><span>Icon_Root</span></TreeRow>
            <TreeRow $pad={50}><Cube /><span>Icon_Sock</span></TreeRow>
            <TreeRow $pad={50} $dark><Cube /><span>Icon_Arrow</span></TreeRow>
            <TreeRow $pad={50}><Cube /><span>Icon_Base</span></TreeRow>
          </Tree>
          <TabStrip><PanelTab $on $focus $gap={8}><BookIcon /><span>My Blueprint</span><button aria-label="Close My Blueprint"><Cross /></button></PanelTab></TabStrip>
          <PanelBar $h={44} $gap={8} $pb={2}><AddButton><Plus />Add</AddButton><SearchBox><Magnifier /><input placeholder="Search" aria-label="Search blueprint" /></SearchBox><button aria-label="Settings"><Gear size={20} /></button></PanelBar>
          <BlueprintBody>
            <BlueprintList>
              <Section><TriDown />GRAPHS<button aria-label="Add graph"><PlusCircle /></button></Section>
              <ul><GraphItem><TriRight /><EventGraphIcon />EventGraph</GraphItem></ul>
              <Section $h={40}><TriDown />FUNCTIONS <span>(21 OVERRIDABLE)</span><button aria-label="Add function"><PlusCircle /></button></Section>
              <Items>
                <Item><ConstructionIcon />ConstructionScript</Item>
                {functions.map((f, i) => <Item key={f} $on={i === 0}><Glyph>ƒ</Glyph><span>{f}</span></Item>)}
              </Items>
              <Section><TriDown />MACROS<button aria-label="Add macro"><PlusCircle /></button></Section>
              <Items>{['GetFloatWithPrecision', 'While Loop Delayed'].map(f => <Item key={f}><Glyph $bold $size={20}>M</Glyph>{f}</Item>)}</Items>
              <Section><TriDown />VARIABLES<button aria-label="Add variable"><PlusCircle /></button></Section>
              <ul>{categories.map(f => <Category key={f}><TriRight />{f}</Category>)}</ul>
            </BlueprintList>
            <ScrollThumb />
          </BlueprintBody>
        </Column>

        <Column>
          <TabStrip>
            <PanelTab $gap={8}><ViewportIcon /><span>Viewport</span></PanelTab>
            <PanelTab $on $gap={10}><Glyph>ƒ</Glyph><span>Run Global Envi…</span><button aria-label="Close graph"><Cross /></button></PanelTab>
          </TabStrip>
          <Graph>
            <RedZone />
            <Comment $x={222} $y={-60} $w={458} $h={102} />
            <Comment $x={230} $y={229} $w={457} $h={338}><CommentTitle>Wind Directional Source with tag cloth</CommentTitle></Comment>
            <Wires width="1070" height="603" viewBox="343 162 1070 603" fill="none" aria-hidden="true">
              <path d="M343 262C355 350 372 430 385 500S430 690 453 765" stroke="#4c4848" />
              <path d="M421 162C470 330 530 486 612 486H810" stroke="#635354" strokeWidth="1.300" />
              <circle cx="612" cy="485.500" r="3" fill="#fff" />
              <path d="M687 512C740 512 755 501 812 501" stroke="#6b2226" strokeWidth="1.300" />
              <path d="M722 572C760 572 765 531 812 531M715 625C770 625 760 560 812 560M687 685C770 685 750 590 812 590" stroke="#456b2a" strokeWidth="1.400" />
              <path d="M702 602C755 602 760 545 812 545" stroke="#6b2226" strokeWidth="1.300" />
              <path d="M687 655C760 655 755 575 812 575" stroke="#76537f" strokeWidth="1.300" />
              <path d="M716 542C760 542 765 516 808 516" stroke="#8ce68a" strokeWidth="5" />
            </Wires>
            {nodes.map(n => (
              <VarNode key={n.t} $y={n.y} $w={n.w} $tint={tints[n.c]}>{n.hot ? <Hot>{n.t}</Hot> : n.t}<Pin $c={n.c} /></VarNode>
            ))}
            <FnNode>
              <FnTitle><Glyph $size={8} $w={6}>ƒ</Glyph>Set Wind Directional Source GES</FnTitle>
              <Svg w={117} h={18}><path d="M6 5h3l3 4-3 4H6z" fill="#fff" /><path d="M107 5.500h1.500l3 3.500-3 3.500H107z" stroke="#ccc" /></Svg>
              <FnRow><Pin $c={red} />Enable</FnRow>
              <FnRow $hot><Pin $c={green} />Wind Speed</FnRow>
              <FnRow><Pin $c={green} />Wind Direction</FnRow>
            </FnNode>
            <Bubble><BubbleText>Wind Directional Source with tag cloth</BubbleText></Bubble>
            <Watermark>BLUEPRINT</Watermark>
            <Vignette />
            <CrumbBar>
              <CrumbIcon aria-label="Bookmarks"><Bookmark /><Chevron /></CrumbIcon>
              <Bar $ml={9} />
              <CrumbIcon $ml={10} aria-label="Back"><ArrowLeft /></CrumbIcon>
              <CrumbIcon $ml={24} aria-label="Forward"><ArrowRight /></CrumbIcon>
              <Bar $ml={14} />
              <Glyph $size={32} $w={52}>ƒ</Glyph>
              <CrumbText $ml={8}>BP_GES</CrumbText>
              <CrumbIcon as="span" $ml={10}><Svg w={12} h={20}><path d="M1 1l8 9-8 9" stroke="#ccc" strokeWidth="2.600" /></Svg></CrumbIcon>
              <CrumbText $ml={11}>Run Global Environmental System</CrumbText>
            </CrumbBar>
            <ZoomLabel>Zoom -5</ZoomLabel>
            <Tooltip role="tooltip">Wind Speed<br />Float (double-precision)<br />Current value =<br />0.000000</Tooltip>
          </Graph>
          <TabStrip $top={6}>
            <PanelTab $gap={10}><LogIcon /><span>Compiler Results</span></PanelTab>
            <PanelTab $on $gap={9}><Magnifier /><span>Find Results</span><button aria-label="Close Find Results"><Cross /></button></PanelTab>
          </TabStrip>
          <Results>
            <ResultsBar>
              <SearchBox><Magnifier /><input placeholder="Enter function or event name to find references..." aria-label="Find references" /></SearchBox>
              <FindButton aria-label="Find in blueprints"><Binoculars /></FindButton>
            </ResultsBar>
            <ResultsList />
          </Results>
        </Column>

        <Column>
          <TabStrip><PanelTab $on $gap={9}><PencilLines size={19} /><span>Details</span><button aria-label="Close Details"><Cross /></button></PanelTab></TabStrip>
          <Details>
            <DetailsBar>
              <SearchBox><Magnifier /><input placeholder="Search" aria-label="Search details" /></SearchBox>
              <button aria-label="Property matrix"><TableIcon /></button>
              <button aria-label="View options"><Gear size={20} /></button>
            </DetailsBar>
            <DetailsHead><TriDown />Graph</DetailsHead>
            <PropRow id="desc" label="Description"><TextField id="desc" /></PropRow>
            <PropRow id="cat" label="Category"><Combo $inset><TextField $w={98} id="cat" defaultValue="Default" /><Chevron /></Combo></PropRow>
            <PropRow id="key" label="Keywords"><TextField id="key" /></PropRow>
            <PropRow id="compact" label="Compact Node Title"><TextField id="compact" /></PropRow>
            <PropRow id="pure" label="Pure"><Check type="checkbox" id="pure" /></PropRow>
            <PropRow id="call" label="Call In Editor"><Check type="checkbox" id="call" /></PropRow>
            <PropRow id="access" label="Access Specifier"><Combo><select id="access"><option>Public</option></select><Chevron /></Combo></PropRow>
            <Advanced><TriRight />Advanced</Advanced>
            <DetailsHead><TriDown />Inputs<button aria-label="Add input"><PlusCircle /></button></DetailsHead>
            <InputRow name="Current Wind Speed" />
            <InputRow name="Current Wind Direction" wide />
            <DetailsHead><TriDown />Outputs<button aria-label="Add output"><PlusCircle /></button></DetailsHead>
            <Prop><Message>Please press the + icon above to add parameters</Message><div /></Prop>
          </Details>
        </Column>
      </Main>

      <Status>
        <Seg $gap={5}><button><FolderSearch small />Content Drawer</button></Seg>
        <Seg $gap={8} $pl={14}><button><LogIcon />Output Log</button></Seg>
        <Seg $pl={18} $pr={10} $gap={5}><button><CmdIcon /><CmdLabel>Cmd</CmdLabel><Chevron /></button><Console placeholder="Enter Console Command" aria-label="Console command" /></Seg>
        <Seg $grow />
        <Seg $pl={15} $pr={16}><button><SaveCheck />All Saved</button></Seg>
        <Seg $pl={19} $pr={21}><button><Branch />Revision Control<Chevron /></button></Seg>
      </Status>
    </Shell>
  );
}
